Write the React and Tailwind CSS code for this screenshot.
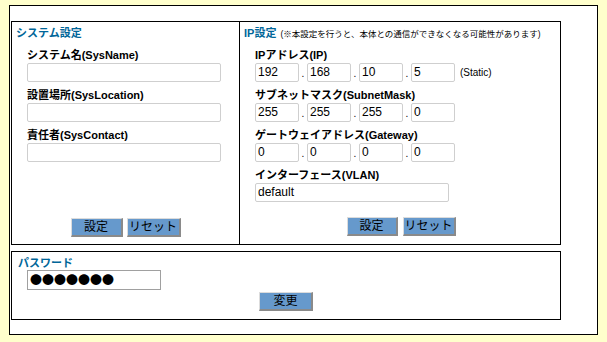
import React from 'react'

const jp = "font-['Liberation_Sans','Noto_Sans_CJK_JP',sans-serif]"

function Btn({ children, w }) {
  return (
    <button
      className={`${w} h-[19px] bg-[#6699cc] text-black text-[12px] leading-none border-l border-t border-r-2 border-b-2 border-l-[#dcdcdc] border-t-[#dcdcdc] border-r-[#8a8a8a] border-b-[#8a8a8a] flex items-center justify-center`}
    >
      {children}
    </button>
  )
}

function Field({ label, first, children }) {
  return (
    <div className={first ? 'mt-[9px]' : 'mt-[7px]'}>
      <div className="h-[13px] leading-[13px] text-[11px] font-bold text-black pl-[15px] whitespace-nowrap">{label}</div>
      <div className="mt-[1px] pl-[15px]">{children}</div>
    </div>
  )
}

function TextBox({ w = 'w-[194px]', value = '' }) {
  return (
    <div className={`${w} h-[19px] border border-[#cfcfcf] rounded-[2px] bg-white px-[2px] text-[12px] leading-[17px] text-black font-['Liberation_Sans',sans-serif]`}>
      {value}
    </div>
  )
}

function IpRow({ values, extra }) {
  return (
    <div className="flex items-center">
      {values.map((v, i) => (
        <div key={i} className="flex items-end">
          {i > 0 && <div className="w-[8px] h-[19px] flex items-end justify-center pb-[3px] text-[10px] leading-none">.</div>}
          <TextBox w="w-[44px]" value={v} />
        </div>
      ))}
      {extra && <span className="ml-[5px] text-[10px] font-['Liberation_Sans',sans-serif]">{extra}</span>}
    </div>
  )
}

export default function App() {
  return (
    <div className={`w-full h-screen bg-[#ffffcc] pt-[5px] pl-[9px] ${jp}`}>
      <div className="w-[589px] h-[330px] border border-black bg-white pt-[15px] pl-[1px]">
        {/* 上段 */}
        <div className="w-[550px] h-[224px] border border-black flex">
          <div className="w-[228px] border-r border-black flex flex-col">
            <div className="mt-[4px] pl-[4px] h-[14px] leading-[14px] text-[11px] font-bold text-[#006699]">システム設定</div>
            <Field label="システム名(SysName)" first>
              <TextBox />
            </Field>
            <Field label="設置場所(SysLocation)">
              <TextBox />
            </Field>
            <Field label="責任者(SysContact)">
              <TextBox />
            </Field>
            <div className="mt-auto mb-[7px] flex justify-center gap-[4px]">
              <Btn w="w-[52px]">設定</Btn>
              <Btn w="w-[54px]">リセット</Btn>
            </div>
          </div>

          <div className="flex-1 flex flex-col">
            <div className="mt-[4px] pl-[4px] h-[14px] leading-[14px] flex items-baseline whitespace-nowrap">
              <span className="text-[11px] font-bold text-[#006699]">IP設定</span>
              <span className="ml-[4px] text-[8.5px] text-black">(※本設定を行うと、本体との通信ができなくなる可能性があります)</span>
            </div>
            <Field label="IPアドレス(IP)" first>
              <IpRow values={['192', '168', '10', '5']} extra="(Static)" />
            </Field>
            <Field label="サブネットマスク(SubnetMask)">
              <IpRow values={['255', '255', '255', '0']} />
            </Field>
            <Field label="ゲートウェイアドレス(Gateway)">
              <IpRow values={['0', '0', '0', '0']} />
            </Field>
            <Field label="インターフェース(VLAN)">
              <TextBox w="w-[194px]" value="default" />
            </Field>
            <div className="mt-auto mb-[8px] flex justify-center gap-[5px] pl-[2px]">
              <Btn w="w-[51px]">設定</Btn>
              <Btn w="w-[53px]">リセット</Btn>
            </div>
          </div>
        </div>

        {/* パスワード */}
        <div className="mt-[6px] w-[550px] h-[69px] border border-black flex flex-col">
          <div className="mt-[4px] pl-[6px] h-[14px] leading-[14px] text-[11px] font-bold text-[#006699]">パスワード</div>
          <div className="pl-[15px]">
            <div className="w-[134px] h-[20px] border border-[#a0a0a0] bg-white pl-[2px] text-[12px] leading-[18px] text-black font-['Noto_Sans_CJK_JP',sans-serif]">●●●●●●●</div>
          </div>
          <div className="mt-[2px] flex justify-center">
            <Btn w="w-[54px]">変更</Btn>
          </div>
        </div>
      </div>
    </div>
  )
}
